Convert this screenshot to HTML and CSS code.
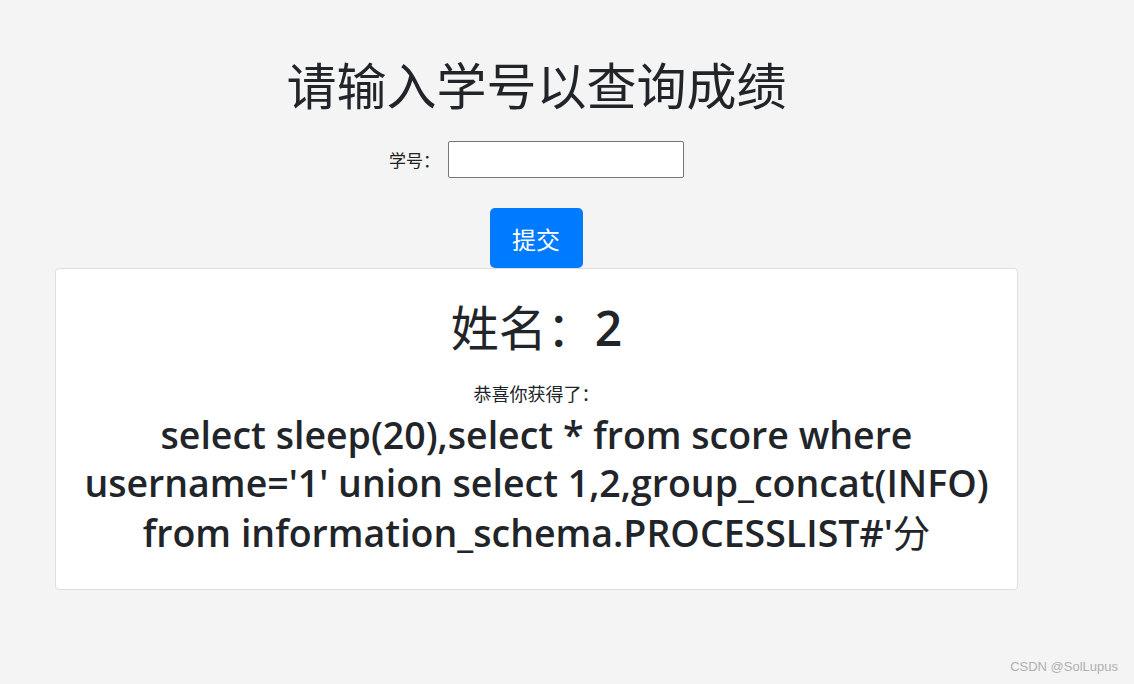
FILE: index.html
```html
<!DOCTYPE html>
<html lang="zh">
<head>
<meta charset="utf-8">
<title>查询成绩</title>
<link rel="stylesheet" href="styles.css">
</head>
<body>
<div class="page">
  <h1 class="title">请输入学号以查询成绩</h1>
  <form class="query">
    <div class="field">
      <label class="label" for="sid">学号：</label>
      <input class="input" id="sid" type="text">
    </div>
    <button class="btn" type="button">提交</button>
  </form>
  <div class="card">
    <h1 class="name">姓名：<span class="num">2</span></h1>
    <p class="congrats">恭喜你获得了：</p>
    <h2 class="sql">select sleep(20),select * from score where username='1' union select 1,2,group_concat(INFO) from information_schema.PROCESSLIST#'<span class="cjk">分</span></h2>
  </div>
</div>
<div class="watermark">CSDN @SolLupus</div>
</body>
</html>
```
FILE: styles.css
```css
html, body {
  margin: 0;
  padding: 0;
}
body {
  background: #f4f4f4;
  font-family: "Open Sans", "Noto Sans CJK SC", sans-serif;
  color: #212529;
  min-height: 684px;
  position: relative;
}
.page {
  width: 963px;
  margin-left: 55px;
  text-align: center;
}
.title {
  margin: 0;
  padding-top: 53px;
  font-family: "Noto Sans CJK SC", sans-serif;
  font-size: 50px;
  line-height: 60px;
  font-weight: 400;
  color: #212529;
}
.query {
  margin: 0;
  display: flex;
  flex-direction: column;
  align-items: center;
}
.field {
  margin-top: 28px;
  display: flex;
  align-items: center;
  height: 37px;
}
.label {
  font-family: "Noto Sans CJK SC", sans-serif;
  font-size: 17px;
  color: #222;
  margin-right: 8px;
}
.input {
  width: 236px;
  height: 37px;
  box-sizing: border-box;
  border: 1px solid #767676;
  border-radius: 2px;
  background: #fff;
  margin: 0;
  padding: 0 4px;
}
.btn {
  margin-top: 30px;
  width: 93px;
  height: 60px;
  border: none;
  border-radius: 5px;
  background: #007bff;
  color: #fff;
  font-family: "Noto Sans CJK SC", sans-serif;
  font-size: 24px;
  padding: 0;
  margin-left: -1px;
}
.card {
  background: #fff;
  border: 1px solid #dedede;
  border-radius: 4px;
  padding: 24px 10px 24px;
  box-sizing: border-box;
  height: 322px;
}
.name {
  margin: 0;
  font-family: "Noto Sans CJK SC", sans-serif;
  font-size: 48px;
  line-height: 64px;
  font-weight: 400;
}
.num {
  font-family: "Open Sans", sans-serif;
  font-weight: 600;
}
.congrats {
  margin: 20px 0 0;
  font-family: "Noto Sans CJK SC", sans-serif;
  font-size: 18px;
  line-height: 26px;
}
.sql {
  margin: 5px 0 0;
  font-size: 37.5px;
  line-height: 48px;
  font-weight: 600;
}
.cjk {
  font-family: "Noto Sans CJK SC", sans-serif;
  font-weight: 400;
}
.watermark {
  position: absolute;
  right: 16px;
  bottom: 10px;
  font-family: "Liberation Sans", sans-serif;
  font-size: 13px;
  color: #b0b0b0;
}
```
